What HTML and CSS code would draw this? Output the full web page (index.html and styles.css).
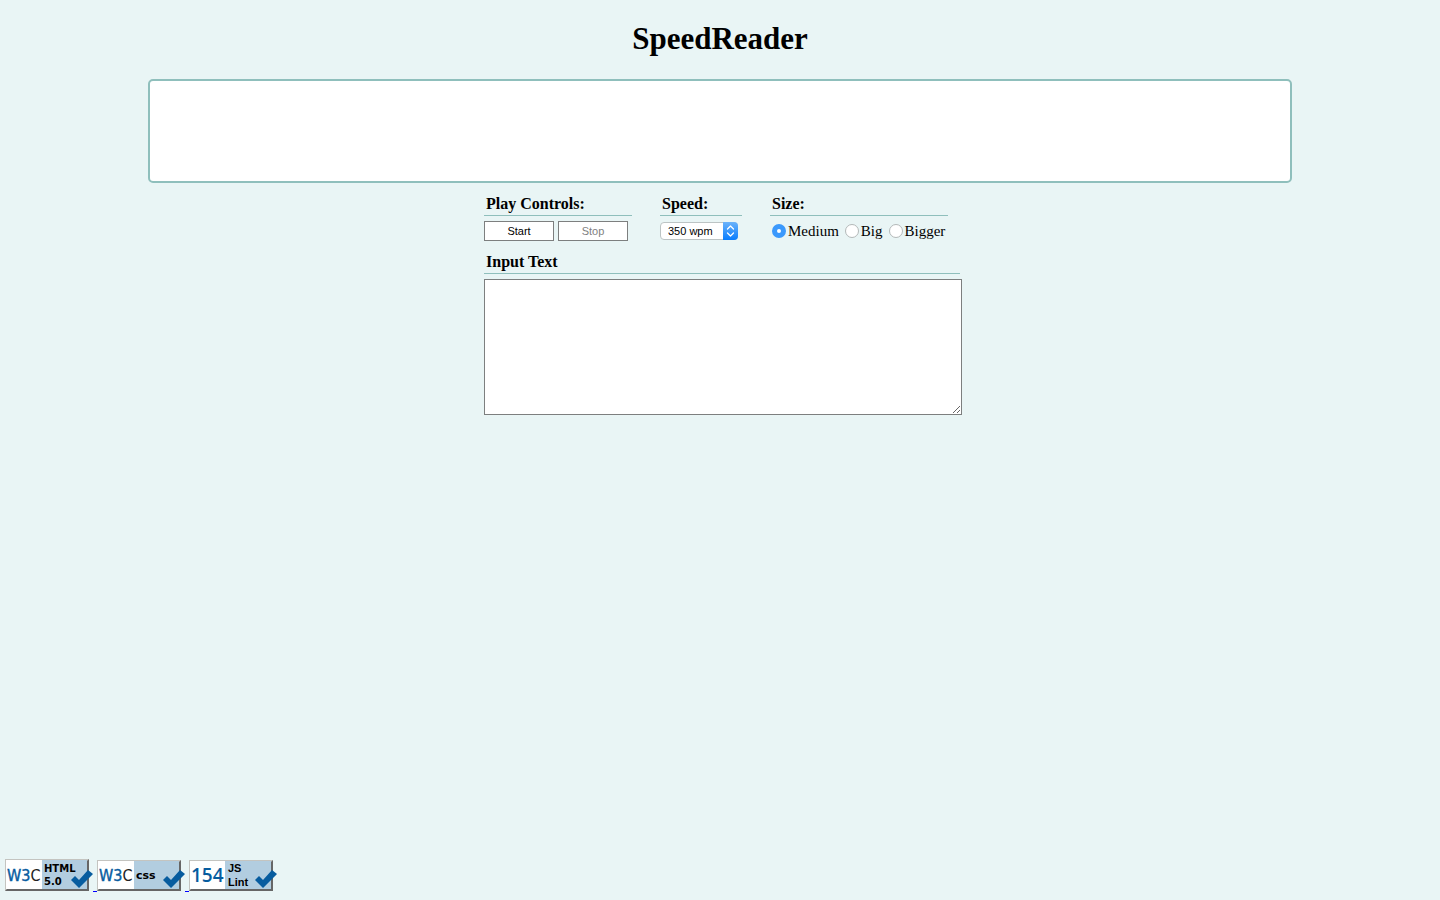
FILE: index.html
```html
<!DOCTYPE html>
<html lang="en">
<head>
<meta charset="utf-8">
<title>SpeedReader</title>
<link rel="stylesheet" href="styles.css">
</head>
<body>
<h1>SpeedReader</h1>
<div class="display"></div>
<main class="panel">
  <div class="controls">
    <section class="group play">
      <h2>Play Controls:</h2>
      <div class="row buttons"><button type="button">Start</button><button type="button" disabled>Stop</button></div>
    </section>
    <section class="group speed">
      <h2><label for="speed">Speed:</label></h2>
      <div class="row">
        <span class="select">
          <select id="speed"><option>350 wpm</option></select>
          <svg class="arrows" viewBox="0 0 15 18" aria-hidden="true"><defs><linearGradient id="blue" x1="0" y1="0" x2="0" y2="1"><stop offset="0" stop-color="#6bb3fa"/><stop offset="1" stop-color="#087dfe"/></linearGradient></defs><path d="M0 0H11Q15 0 15 4V14Q15 18 11 18H0Z" fill="url(#blue)"/><path d="M4.500 7 7.500 4 10.500 7M4.500 11 7.500 14 10.500 11" fill="none" stroke="#fff" stroke-width="1.300" stroke-linecap="round" stroke-linejoin="round"/></svg>
        </span>
      </div>
    </section>
    <section class="group size">
      <h2>Size:</h2>
      <div class="row radios">
        <label><input type="radio" name="size" checked>Medium</label>
        <label><input type="radio" name="size">Big</label>
        <label><input type="radio" name="size">Bigger</label>
      </div>
    </section>
  </div>
  <section class="group">
    <h2><label for="text">Input Text</label></h2>
    <textarea id="text"></textarea>
  </section>
</main>
<footer>
  <a href="#html" aria-label="W3C HTML 5.0">
    <svg width="88" height="32" viewBox="0 0 88 32"><path d="M0 0H84V32H0Z" fill="#c4c4c0"/><path d="M83 1 84 0V32H0L2 30H82V2Z" fill="#666"/><path d="M1 1H37V30H1Z" fill="#fff"/><path d="M37 1H82V30H37Z" fill="#b2cde0"/><text class="w3" x="2" y="22">W3<tspan class="ink">C</tspan></text><text class="tag" x="39" y="13">HTML</text><text class="tag" x="39" y="26">5.0</text><path d="M66 21 70 17 74 21 83 11 88 15 74 29Z" fill="#075c9f"/></svg>
  </a>
  <a href="#css" aria-label="W3C CSS">
    <svg width="88" height="32" viewBox="0 0 88 32"><path d="M0 1H84V32H0Z" fill="#c4c4c0"/><path d="M83 2 84 1V32H0L2 30H82V3Z" fill="#666"/><path d="M1 2H37V30H1Z" fill="#fff"/><path d="M37 2H82V30H37Z" fill="#b2cde0"/><text class="w3" x="2" y="22">W3<tspan class="ink">C</tspan></text><text class="tag css" x="39" y="20">css</text><path d="M66 21 70 17 74 21 83 11 88 15 74 29Z" fill="#075c9f"/></svg>
  </a>
  <a href="#js" aria-label="154 JS Lint">
    <svg width="88" height="32" viewBox="0 0 88 32"><path d="M0 1H84V32H0Z" fill="#c4c4c0"/><path d="M83 2 84 1V32H0L2 30H82V3Z" fill="#666"/><path d="M1 2H36V30H1Z" fill="#fff"/><path d="M36 2H82V30H36Z" fill="#b2cde0"/><text class="num" x="2" y="23">154</text><text class="lint" x="39" y="13">JS</text><text class="lint" x="39" y="27">Lint</text><path d="M66 21 70 17 74 21 83 11 88 15 74 29Z" fill="#075c9f"/></svg>
  </a>
</footer>
</body>
</html>
```
FILE: styles.css
```css
* { box-sizing: border-box; }
body {
  margin: 0;
  min-height: 100vh;
  display: flex;
  flex-direction: column;
  background: #e9f5f5;
  color: #000;
  font: 16px/20px "Liberation Serif", serif;
}
h1 { margin: 19px 0 20px; font-size: 31px; line-height: 40px; text-align: center; }
.display {
  width: calc(80% - 8px);
  height: 104px;
  margin: 0 auto;
  background: #fff;
  border: 2px solid #8fbfbc;
  border-radius: 5px;
}
.panel { width: 480px; max-width: 100%; margin: 11px auto 0; padding-left: 4px; }
.controls { display: flex; gap: 28px; margin-bottom: 11px; }
.play { width: 148px; }
.speed { width: 82px; }
.size { width: 178px; }
h2 {
  margin: 0 0 5px;
  padding: 0 0 2px 2px;
  border-bottom: 1px solid #8fbfbc;
  font-size: 16px;
  line-height: 19px;
}
.row { display: flex; align-items: center; height: 20px; }
.buttons { gap: 4px; }
button {
  width: 70px;
  height: 20px;
  padding: 0;
  background: #fff;
  border: 1px solid #7d7f7f;
  color: #000;
  font: 11px "Liberation Sans", sans-serif;
}
button:disabled { color: #7f7f7f; }
.select { position: relative; display: flex; width: 78px; height: 18px; }
select {
  appearance: none;
  width: 100%;
  padding: 0 0 0 7px;
  background: #fff;
  border: 1px solid #bcc4c4;
  border-radius: 4px;
  color: #000;
  font: 11px "Liberation Sans", sans-serif;
}
.arrows { position: absolute; right: 0; top: 0; width: 15px; height: 18px; pointer-events: none; }
.radios { gap: 6px; padding-left: 2px; }
.radios label { display: flex; align-items: center; gap: 2px; font-size: 15px; line-height: 18px; }
input {
  appearance: none;
  width: 14px;
  height: 14px;
  margin: 0;
  background: #fff;
  border: 1px solid #b3b8b8;
  border-radius: 50%;
}
input:checked { border: 5px solid #3b99fc; }
textarea {
  display: block;
  width: calc(100% + 2px);
  height: 136px;
  padding: 2px;
  background: #fff;
  border: 1px solid #7d7f7f;
  font: 13px "Liberation Sans", sans-serif;
}
footer { display: flex; gap: 4px; margin-top: auto; padding: 0 5px 9px; }
footer a { display: flex; position: relative; }
footer a:not(:last-child)::after {
  content: "";
  position: absolute;
  left: 100%;
  bottom: -1px;
  width: 4px;
  height: 1px;
  background: #00f;
}
.w3 { fill: #075c9f; stroke: #075c9f; stroke-width: 0.4px; font: 16px "DejaVu Sans Condensed", "Liberation Sans", sans-serif; }
.ink { fill: #222; stroke: none; }
.tag { font: bold 10px "DejaVu Sans", sans-serif; }
.css { font-size: 11px; }
.num { fill: #075c9f; font: 600 19px "Open Sans", sans-serif; }
.lint { font: bold 11px "Liberation Sans", sans-serif; }
```
